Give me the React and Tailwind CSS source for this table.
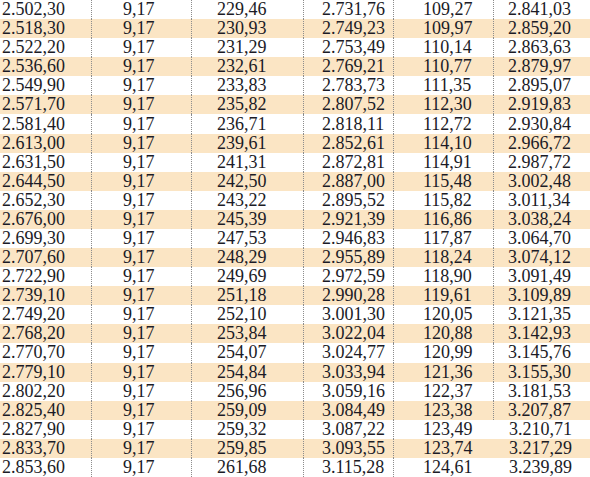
const ROWS = [
  ['2.502,30', '9,17', '229,46', '2.731,76', '109,27', '2.841,03'],
  ['2.518,30', '9,17', '230,93', '2.749,23', '109,97', '2.859,20'],
  ['2.522,20', '9,17', '231,29', '2.753,49', '110,14', '2.863,63'],
  ['2.536,60', '9,17', '232,61', '2.769,21', '110,77', '2.879,97'],
  ['2.549,90', '9,17', '233,83', '2.783,73', '111,35', '2.895,07'],
  ['2.571,70', '9,17', '235,82', '2.807,52', '112,30', '2.919,83'],
  ['2.581,40', '9,17', '236,71', '2.818,11', '112,72', '2.930,84'],
  ['2.613,00', '9,17', '239,61', '2.852,61', '114,10', '2.966,72'],
  ['2.631,50', '9,17', '241,31', '2.872,81', '114,91', '2.987,72'],
  ['2.644,50', '9,17', '242,50', '2.887,00', '115,48', '3.002,48'],
  ['2.652,30', '9,17', '243,22', '2.895,52', '115,82', '3.011,34'],
  ['2.676,00', '9,17', '245,39', '2.921,39', '116,86', '3.038,24'],
  ['2.699,30', '9,17', '247,53', '2.946,83', '117,87', '3.064,70'],
  ['2.707,60', '9,17', '248,29', '2.955,89', '118,24', '3.074,12'],
  ['2.722,90', '9,17', '249,69', '2.972,59', '118,90', '3.091,49'],
  ['2.739,10', '9,17', '251,18', '2.990,28', '119,61', '3.109,89'],
  ['2.749,20', '9,17', '252,10', '3.001,30', '120,05', '3.121,35'],
  ['2.768,20', '9,17', '253,84', '3.022,04', '120,88', '3.142,93'],
  ['2.770,70', '9,17', '254,07', '3.024,77', '120,99', '3.145,76'],
  ['2.779,10', '9,17', '254,84', '3.033,94', '121,36', '3.155,30'],
  ['2.802,20', '9,17', '256,96', '3.059,16', '122,37', '3.181,53'],
  ['2.825,40', '9,17', '259,09', '3.084,49', '123,38', '3.207,87'],
  ['2.827,90', '9,17', '259,32', '3.087,22', '123,49', '3.210,71'],
  ['2.833,70', '9,17', '259,85', '3.093,55', '123,74', '3.217,29'],
  ['2.853,60', '9,17', '261,68', '3.115,28', '124,61', '3.239,89'],
];

// column width + where the number starts inside it
const COLS = [
  'w-[91px] pl-[2px]',
  'w-[100px] pl-[31px] border-l border-dotted border-[#8c8c8c]',
  'w-[112px] pl-[25px] border-l border-dotted border-[#8c8c8c]',
  'w-[90px] pl-[18px] border-l border-dotted border-[#8c8c8c]',
  'w-[100px] pl-[29px] border-l border-dotted border-[#8c8c8c]',
  'w-[97px] pl-[14px] border-l border-dotted border-[#8c8c8c]',
];
// the last rule stops a few rows short of the bottom
const LAST_COL_PLAIN = 'w-[97px] pl-[15px] border-l border-transparent';

export default function App() {
  return (
    <div className="w-[590px] h-[477px] overflow-hidden bg-white grid grid-rows-[repeat(25,1fr)] font-['Liberation_Serif',serif] text-[18px] leading-[19px] text-[#1b1b26]">
      {ROWS.map((row, i) => (
        <div
          key={i}
          className={`flex ${i % 2 === 1 ? 'bg-[#fbe5c4]' : 'bg-white'}`}>
          {row.map((val, j) => (
            <div
              key={j}
              className={`${j === 5 && i >= 22 ? LAST_COL_PLAIN : COLS[j]} shrink-0 flex items-center whitespace-nowrap`}>
              {val}
            </div>
          ))}
        </div>
      ))}
    </div>
  );
}
